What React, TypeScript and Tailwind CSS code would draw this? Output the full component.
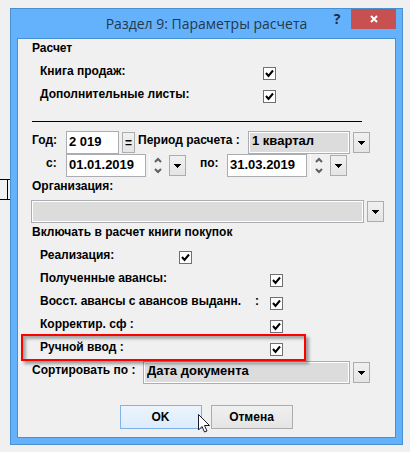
import { ReactNode, useState } from "react";

const boxClass = "h-[23px] border border-[#abadb3] rounded-none text-[13px] leading-4 font-bold text-black outline-none";
const inputClass = `${boxClass} shrink-0 bg-white px-0.5 pb-[3px]`;
const selectClass = `${boxClass} min-w-0 flex-1 appearance-none bg-[#dcdcdc] px-[3px] pb-[3px] shadow-[inset_0_0_0_1px_#fff]`;

const Row = ({ children }: { children?: ReactNode }) => (
    <div className="flex h-[23px] items-start whitespace-nowrap">{children}</div>
);

type CheckRowProps = {
    id: string;
    label: string;
    colon?: string;
    width: string;
};

const CheckRow = ({ id, label, colon, width }: CheckRowProps) => {
    const [checked, setChecked] = useState(true);

    return (
        <Row>
            <label htmlFor={id} className={`ml-[9px] flex shrink-0 justify-between pr-[11px] ${width}`}>
                <span>{label}</span>
                {colon && <span>{colon}</span>}
            </label>
            <span className="relative mt-[5px] flex size-[13px]">
                <input
                    id={id}
                    type="checkbox"
                    checked={checked}
                    onChange={(e) => setChecked(e.target.checked)}
                    className="size-[13px] appearance-none border border-[#707070] bg-white"
                />
                {checked && (
                    <svg viewBox="0 0 13 13" className="pointer-events-none absolute inset-0 size-[13px]">
                        <path d="M3 6 L5.5 9 L10 3.5" fill="none" stroke="#000" strokeWidth="2" />
                    </svg>
                )}
            </span>
        </Row>
    );
};

const DropButton = ({ label }: { label: string }) => (
    <button
        type="button"
        aria-label={label}
        className="mt-px ml-[3px] flex h-[21px] w-[17px] shrink-0 items-center justify-center border border-[#acacac] bg-linear-to-b from-[#f0f0f0] to-[#e5e5e5]"
    >
        <svg width="7" height="4" viewBox="0 0 7 4" shapeRendering="crispEdges">
            <path d="M0 0h7v1h-1v1h-1v1h-1v1h-1v-1h-1v-1h-1v-1h-1z" fill="#000" />
        </svg>
    </button>
);

const DateField = ({ id, value }: { id: string; value: string }) => (
    <>
        <input id={id} defaultValue={value} className={`${inputClass} w-20`} />
        <span className="ml-[3px] flex h-[23px] w-[17px] shrink-0 flex-col items-center justify-between border-l border-white py-[3px]">
            <button type="button" aria-label="Больше" className="flex">
                <svg width="8" height="6" viewBox="0 0 8 6">
                    <path d="M1 5 L4 2 L7 5" fill="none" stroke="#606060" strokeWidth="2" />
                </svg>
            </button>
            <button type="button" aria-label="Меньше" className="flex">
                <svg width="8" height="6" viewBox="0 0 8 6">
                    <path d="M1 1 L4 4 L7 1" fill="none" stroke="#606060" strokeWidth="2" />
                </svg>
            </button>
        </span>
        <DropButton label="Календарь" />
    </>
);

const App = () => {
    return (
        <div className="relative min-h-screen bg-[#f0f0f0] pt-2 pr-[7px] pb-[7px] pl-2.5 font-['Liberation_Sans',Arial,sans-serif] text-xs font-bold text-black">
            <div className="absolute top-[179px] left-0 h-[21px] w-2.5 border-y border-black">
                <div className="ml-[7px] h-full w-px bg-black" />
            </div>

            <div className="relative border border-[#4a8fd0] bg-[#64b2fc] px-1.5 pb-1.5">
                <header className="relative flex h-[29px] items-center justify-center">
                    <h1 className="font-['Open_Sans','Noto_Sans',sans-serif] text-sm font-normal text-[#24384c]">
                        Раздел 9: Параметры расчета
                    </h1>
                    <div className="absolute top-0 right-0 flex">
                        <button type="button" className="h-5 w-7 font-['Open_Sans',sans-serif] text-sm leading-5 font-bold text-[#1c2c3c]">
                            ?
                        </button>
                        <button type="button" aria-label="Закрыть" className="flex h-5 w-[45px] items-center justify-center bg-[#c75050]">
                            <svg width="8" height="8" viewBox="0 0 8 8">
                                <path d="M1 1 L7 7 M7 1 L1 7" stroke="#fff" strokeWidth="2" />
                            </svg>
                        </button>
                    </div>
                </header>

                <form onSubmit={(e) => e.preventDefault()} className="border border-[#4a8fd0] bg-[#f0f0f0] pr-[11px] pb-2 pl-[13px] leading-[18px]">
                    <Row>
                        <h2 className="ml-px">Расчет</h2>
                    </Row>
                    <CheckRow id="sales" label="Книга продаж:" width="w-[223px]" />
                    <CheckRow id="extra" label="Дополнительные листы:" width="w-[223px]" />
                    <Row>
                        <hr className="mt-[13px] mr-[22px] ml-px flex-1 border-black" />
                    </Row>

                    <Row>
                        <label htmlFor="year" className="ml-px w-[34px] shrink-0">Год:</label>
                        <input id="year" defaultValue="2 019" className={`${inputClass} w-[53px]`} />
                        <button type="button" className="mt-px ml-[3px] h-[21px] w-[13px] shrink-0 border border-[#acacac] bg-linear-to-b from-[#f0f0f0] to-[#e5e5e5]">
                            =
                        </button>
                        <label htmlFor="period" className="ml-[3px] w-[110px] shrink-0">Период расчета :</label>
                        <select id="period" className={selectClass}>
                            <option>1 квартал</option>
                        </select>
                        <DropButton label="Выбрать период" />
                        <span className="w-3.5 shrink-0" />
                    </Row>
                    <Row>
                        <label htmlFor="from" className="ml-[15px] w-5 shrink-0">с:</label>
                        <DateField id="from" value="01.01.2019" />
                        <label htmlFor="to" className="ml-3.5 w-[27px] shrink-0">по:</label>
                        <DateField id="to" value="31.03.2019" />
                    </Row>
                    <Row>
                        <label htmlFor="org" className="ml-px">Организация:</label>
                    </Row>
                    <Row>
                        <select id="org" className={selectClass}>
                            <option></option>
                        </select>
                        <DropButton label="Выбрать организацию" />
                    </Row>

                    <Row>
                        <h2 className="ml-px">Включать в расчет книги покупок</h2>
                    </Row>
                    <CheckRow id="realization" label="Реализация:" width="w-[139px]" />
                    <CheckRow id="advances" label="Полученные авансы:" width="w-[230px]" />
                    <CheckRow id="restored" label="Восст. авансы с авансов выданн." colon=":" width="w-[230px]" />
                    <CheckRow id="corrected" label="Корректир. сф :" width="w-[230px]" />
                    <div className="relative">
                        <CheckRow id="manual" label="Ручной ввод :" width="w-[230px]" />
                        <div className="pointer-events-none absolute -top-1 -left-2.5 z-10 h-[27px] w-[285px] border-2 border-[#f00] shadow-[3px_3px_3px_rgba(0,0,0,0.35),inset_3px_3px_3px_rgba(0,0,0,0.3)]" />
                    </div>
                    <Row>
                        <label htmlFor="sort" className="ml-px w-[111px] shrink-0">Сортировать по :</label>
                        <select id="sort" className={selectClass}>
                            <option>Дата документа</option>
                        </select>
                        <DropButton label="Выбрать сортировку" />
                        <span className="w-3.5 shrink-0" />
                    </Row>

                    <div className="mt-[21px] mr-[3px] flex justify-center gap-[9px]">
                        <button type="submit" className="relative h-6 w-[82px] border border-[#7eb4ea] bg-linear-to-b from-[#ecf4fc] to-[#dcecfc]">
                            OK
                            <svg width="12" height="19" viewBox="0 0 12 19" className="pointer-events-none absolute top-2 left-[77px] z-10">
                                <path d="M0.5 0.5 V16 L4 12.5 L6.5 18 L9 17 L6.5 11.5 H11.5 Z" fill="#fff" stroke="#1a1a2e" />
                            </svg>
                        </button>
                        <button type="button" className="h-6 w-[82px] border border-[#acacac] bg-linear-to-b from-[#f0f0f0] to-[#e5e5e5]">
                            Отмена
                        </button>
                    </div>
                </form>
            </div>
        </div>
    );
};

export default App;
